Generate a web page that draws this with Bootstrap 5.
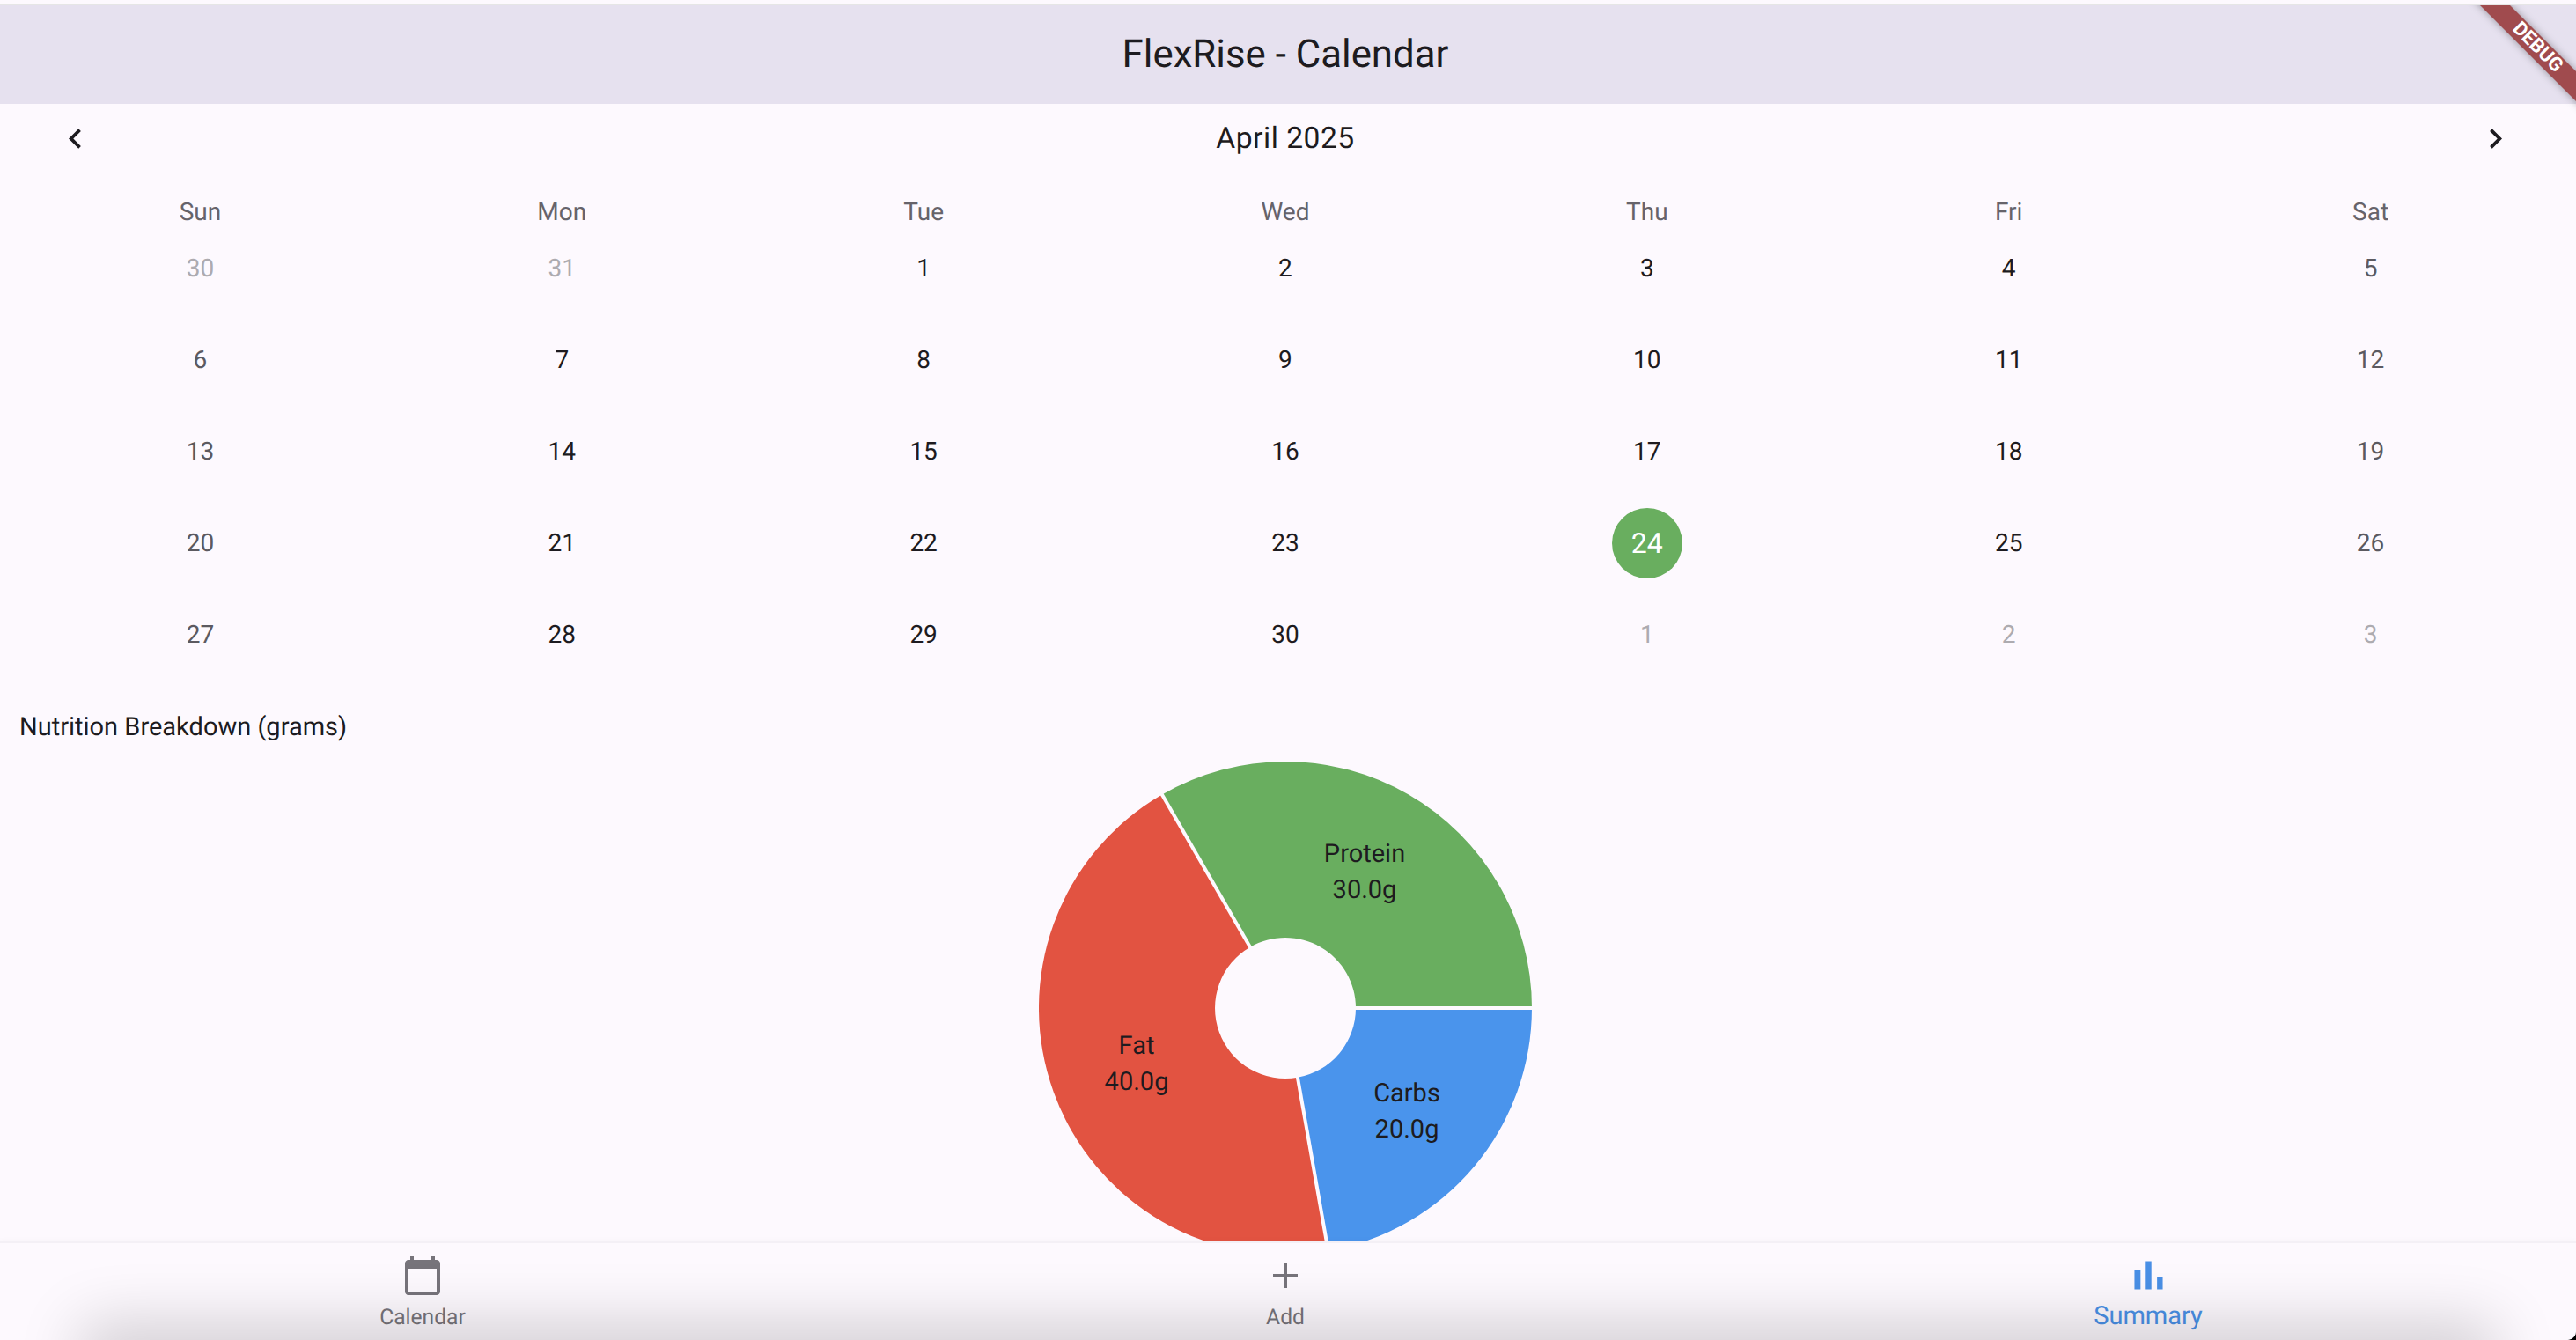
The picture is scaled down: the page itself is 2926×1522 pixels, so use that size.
<!DOCTYPE html>
<html lang="en">
<head>
  <meta charset="UTF-8">
  <title>FlexRise - Calendar</title>
  <link href="https://cdn.jsdelivr.net/npm/bootstrap@5.3.0/dist/css/bootstrap.min.css" rel="stylesheet">
  <style>
    html, body { height: 100%; background: #000; }
    body { color: #1d1b20; font-family: Roboto, "Liberation Sans", sans-serif; overflow: hidden; text-rendering: geometricPrecision; }
    .app-shell { height: 1522px; padding-top: 4px; background: #fdf9fe; border-bottom-right-radius: 10px; }
    .app-top { height: 114px; padding-right: 6px; background: #e6e1ef; border-top: 2px solid #e6e6e6; font-size: 43.8px; }
    .month-row { height: 78px; padding: 0 69px 0 63px; font-size: 33.6px; letter-spacing: .5px; }
    .month-row span { padding-top: 2px; }
    .month-btn { width: 45px; height: 45px; fill: #1d1b20; }
    .cal-grid { display: grid; grid-template-columns: repeat(7, 1fr); padding: 0 28px 0 22px; text-align: center; }
    .cal-head { margin-top: 24px; height: 40px; align-items: center; font-size: 28px; color: #66636a; }
    .cal-days { grid-auto-rows: 88px; row-gap: 16px; margin-top: 1px; font-size: 28px; align-items: center; justify-items: center; }
    .day-cell { width: 80px; height: 80px; }
    .day-end { color: #5c5a60; }
    .day-out { color: #adabb0; }
    .day-picked { background: #69ae5f; color: #fff; font-size: 32px; }
    .chart-title { margin-top: 40px; padding-left: 22px; font-size: 29px; line-height: 42px; }
    .chart-area { padding-right: 6px; padding-top: 18px; }
    .pie-box { width: 560px; height: 560px; }
    .pie-label { transform: translate(-50%, -50%); font-size: 29px; line-height: 40.5px; white-space: nowrap; }
    .lbl-protein { left: 370px; top: 125px; }
    .lbl-fat { left: 111px; top: 343px; }
    .lbl-carbs { left: 418px; top: 397px; }
    .tab-bar { height: 112px; background: #fdf9fe; border-top: 2px solid #f4f0f6; box-shadow: 0 -2px 5px rgba(0,0,0,.025); padding-right: 6px; overflow: hidden; }
    .tab-item { flex: 0 0 980px; color: #77747b; font-size: 24.6px; }
    .tab-item.active { color: #4a90e6; font-size: 29px; }
    .tab-icon { width: 48px; height: 48px; fill: currentColor; margin-top: 13px; }
    .tab-item.active .tab-icon { width: 55px; height: 55px; margin-top: 9px; }
    .tab-text { line-height: 30px; margin-top: 9px; }
    .tab-item.active .tab-text { margin-top: 4px; }
    .edge-shadow { left: 120px; right: 120px; bottom: -30px; height: 20px; box-shadow: 0 0 70px 28px rgba(0,0,0,.18); }
    .debug-ribbon { top: 6px; right: 0; width: 130px; height: 130px; overflow: hidden; pointer-events: none; }
    .debug-band { width: 220px; height: 24px; top: 36px; left: -24px; transform: rotate(45deg); background: #a04b4e; color: #fff; font-size: 22px; font-weight: 700; line-height: 24px; text-align: center; box-shadow: 0 0 10px rgba(0,0,0,.35); }
  </style>
</head>
<body>
  <div class="app-shell position-relative d-flex flex-column overflow-hidden">
    <!-- app bar -->
    <header class="app-top d-flex align-items-center justify-content-center flex-shrink-0">FlexRise - Calendar</header>

    <!-- calendar -->
    <div class="month-row d-flex align-items-center justify-content-between flex-shrink-0">
      <svg class="month-btn" viewBox="0 0 24 24"><path d="M15.41 7.41 14 6l-6 6 6 6 1.41-1.41L10.83 12z"/></svg>
      <span>April 2025</span>
      <svg class="month-btn" viewBox="0 0 24 24"><path d="M10 6 8.59 7.41 13.17 12l-4.58 4.59L10 18l6-6z"/></svg>
    </div>
    <div class="cal-grid cal-head flex-shrink-0" id="week-row"></div>
    <div class="cal-grid cal-days flex-shrink-0" id="day-grid"></div>

    <!-- chart -->
    <div class="chart-title flex-shrink-0">Nutrition Breakdown (grams)</div>
    <div class="chart-area flex-grow-1 overflow-hidden d-flex justify-content-center">
      <div class="pie-box position-relative flex-shrink-0">
        <svg width="560" height="560" viewBox="0 0 560 560">
          <path fill="#4a94ec" d="M560 280A280 280 0 0 1 328.62 555.75L293.89 358.78A80 80 0 0 0 360 280Z"/>
          <path fill="#e25341" d="M328.62 555.75A280 280 0 0 1 140 37.51L240 210.72A80 80 0 0 0 293.89 358.78Z"/>
          <path fill="#69ae5f" d="M140 37.51A280 280 0 0 1 560 280L360 280A80 80 0 0 0 240 210.72Z"/>
          <g stroke="#fdf9fe" stroke-width="4">
            <line x1="350" y1="280" x2="570" y2="280"/>
            <line x1="292" y1="348" x2="330.4" y2="565.6"/>
            <line x1="245" y1="219.4" x2="135" y2="28.9"/>
          </g>
        </svg>
        <div class="pie-label lbl-protein position-absolute text-center">Protein<br>30.0g</div>
        <div class="pie-label lbl-fat position-absolute text-center">Fat<br>40.0g</div>
        <div class="pie-label lbl-carbs position-absolute text-center">Carbs<br>20.0g</div>
      </div>
    </div>

    <!-- bottom nav -->
    <nav class="tab-bar d-flex justify-content-center flex-shrink-0 position-relative">
      <div class="tab-item d-flex flex-column align-items-center">
        <svg class="tab-icon" viewBox="0 0 24 24"><path d="M20 3h-1V1h-2v2H7V1H5v2H4c-1.1 0-2 .9-2 2v16c0 1.1.9 2 2 2h16c1.1 0 2-.9 2-2V5c0-1.1-.9-2-2-2zm0 18H4V8h16v13z"/></svg>
        <div class="tab-text">Calendar</div>
      </div>
      <div class="tab-item d-flex flex-column align-items-center">
        <svg class="tab-icon" viewBox="0 0 24 24"><path d="M19 13h-6v6h-2v-6H5v-2h6V5h2v6h6v2z"/></svg>
        <div class="tab-text">Add</div>
      </div>
      <div class="tab-item active d-flex flex-column align-items-center">
        <svg class="tab-icon" viewBox="0 0 24 24"><path d="M5 9.2h3V19H5zM10.6 5h2.8v14h-2.8zm5.6 8H19v6h-2.8z"/></svg>
        <div class="tab-text">Summary</div>
      </div>
      <div class="edge-shadow position-absolute"></div>
    </nav>

    <div class="debug-ribbon position-absolute">
      <div class="debug-band position-absolute">DEBUG</div>
    </div>
  </div>

  <script>
    const weekRow = document.getElementById('week-row');
    const dayGrid = document.getElementById('day-grid');

    ['Sun', 'Mon', 'Tue', 'Wed', 'Thu', 'Fri', 'Sat'].forEach(name => {
      const el = document.createElement('div');
      el.textContent = name;
      weekRow.appendChild(el);
    });

    // 30, 31 from March, then April, then 1-3 of May
    const days = [30, 31];
    for (let d = 1; d <= 30; d++) days.push(d);
    days.push(1, 2, 3);

    days.forEach((d, i) => {
      const el = document.createElement('div');
      el.className = 'day-cell d-flex align-items-center justify-content-center rounded-circle';
      el.textContent = d;
      if (i < 2 || i > 31) el.classList.add('day-out');
      else if (i % 7 === 0 || i % 7 === 6) el.classList.add('day-end');
      if (d === 24) el.classList.add('day-picked');
      dayGrid.appendChild(el);
    });
  </script>
  <script src="https://cdn.jsdelivr.net/npm/bootstrap@5.3.0/dist/js/bootstrap.bundle.min.js"></script>
</body>
</html>
